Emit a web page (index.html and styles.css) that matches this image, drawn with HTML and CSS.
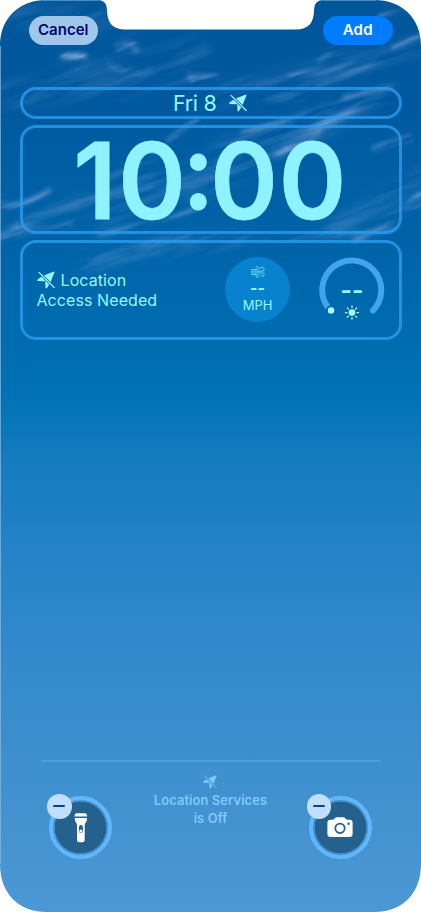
FILE: index.html
```html
<!DOCTYPE html>
<html lang="en">
<head>
<meta charset="utf-8">
<meta name="viewport" content="width=device-width, initial-scale=1">
<title>Lock Screen</title>
<link rel="stylesheet" href="styles.css">
</head>
<body>
<svg class="defs" width="0" height="0" aria-hidden="true">
  <mask id="slash-gap" maskUnits="userSpaceOnUse" x="0" y="0" width="18" height="18">
    <rect width="18" height="18" fill="#fff"/>
    <path d="M-1-1.700 18 17.300" stroke="#000" stroke-width="2.700"/>
  </mask>
  <symbol id="location-slash" viewBox="0 0 18 18">
    <path d="M1 10Q-.7 9.500.6 8.500L5 5.200 16.200.7Q17.800.1 17.300 1.700L13.400 11.600 10.200 16.800Q9 18.300 8.500 16.700L8.200 10.300Z" fill="currentColor" mask="url(#slash-gap)"/>
    <path d="M2 1.300 17.200 16.500" fill="none" stroke="currentColor" stroke-width="1.200" stroke-linecap="round"/>
  </symbol>
</svg>
<main class="screen">
  <svg class="wallpaper" viewBox="0 0 421 912" aria-hidden="true">
    <defs>
      <linearGradient id="sky" x1="0" y1="0" x2="0" y2="1">
        <stop offset="0" stop-color="#00569b"/>
        <stop offset=".11" stop-color="#00599f"/>
        <stop offset=".26" stop-color="#0063a8"/>
        <stop offset=".37" stop-color="#006cb0"/>
        <stop offset=".435" stop-color="#0072b5"/>
        <stop offset=".5" stop-color="#137bbe"/>
        <stop offset=".6" stop-color="#2382c7"/>
        <stop offset=".7" stop-color="#3189cb"/>
        <stop offset=".83" stop-color="#3d8fcd"/>
        <stop offset="1" stop-color="#4b98d4"/>
      </linearGradient>
      <clipPath id="outline">
        <path d="M47 0H97Q107 0 107 9.500V10C107 23 113 29.500 125 29.500H296C308 29.500 314 23 314 10V9.500Q314 0 324 0H374C402 0 421 18 421 46V864C421 894 402 912 374 912H47C19 912 0 894 0 864V46C0 18 19 0 47 0Z"/>
      </clipPath>
      <filter id="streaks" x="0" y="0" width="100%" height="100%" color-interpolation-filters="sRGB">
        <feTurbulence type="fractalNoise" baseFrequency=".014 .1" numOctaves="4" seed="11"/>
        <feColorMatrix values="0 0 0 0 .52  0 0 0 0 .67  0 0 0 0 .87  2.100 0 0 0 -.68"/>
      </filter>
      <filter id="soft" x="-20%" y="-50%" width="140%" height="200%">
        <feGaussianBlur stdDeviation="2.200"/>
      </filter>
      <filter id="haze" x="-20%" y="-50%" width="140%" height="200%">
        <feGaussianBlur stdDeviation="6"/>
      </filter>
      <mask id="clouds" maskUnits="userSpaceOnUse" x="0" y="0" width="421" height="290">
        <g filter="url(#haze)" fill="none" stroke="#fff" stroke-linecap="round">
          <path d="M20 15 130 25M60 80 200 50M225 95 421 45M5 95 180 76M110 220 225 150" stroke-width="24" opacity=".25"/>
          <path d="M190 195 390 93M0 232 150 180M225 150 330 112M330 230 421 175M80 262 240 235" stroke-width="16" opacity=".38"/>
        </g>
        <g filter="url(#soft)" fill="none" stroke="#fff" stroke-linecap="round">
          <path d="M110 64Q125 76 150 69M118 47Q134 40 136 50M63 55 84 57" stroke-width="7" opacity=".95"/>
          <path d="M188 74Q194 86 192 77L217 77M194 86 191 78" stroke-width="5" opacity=".9"/>
          <path d="M290 76 355 65M317 88 380 59M319 61 342 42M379 16 420 8M393 48 420 35" stroke-width="4" opacity=".8"/>
          <path d="M305 117Q335 109 365 93M267 98 302 97M345 98 390 91M285 144 385 92" stroke-width="7" opacity=".6"/>
          <path d="M168 140 197 119M100 180 165 153M217 162 305 121M242 132 300 119" stroke-width="4" opacity=".65"/>
          <path d="M0 204Q24 207 49 191M0 237 58 223M15 228 70 224M98 233Q155 227 199 208" stroke-width="6" opacity=".7"/>
          <path d="M278 155 318 133M374 148 410 138M355 239Q385 227 420 195M380 223 421 203" stroke-width="7" opacity=".7"/>
          <path d="M88 259Q115 260 142 248L188 237M265 242 395 229" stroke-width="5" opacity=".6"/>
        </g>
      </mask>
    </defs>
    <g clip-path="url(#outline)">
      <rect width="421" height="912" fill="url(#sky)"/>
      <g mask="url(#clouds)">
        <rect x="-150" y="-50" width="750" height="550" transform="rotate(-20 210 130)" filter="url(#streaks)"/>
      </g>
      <path d="M.5 46V864" stroke="#8dbbe0" opacity=".7"/>
      <path d="M43 .5H98M323 .5H376" stroke="#8dbbe0" opacity=".55"/>
    </g>
  </svg>

  <header class="toolbar">
    <button class="pill cancel">Cancel</button>
    <button class="pill add">Add</button>
  </header>

  <section class="frames">
    <div class="frame date">
      <span class="date-text">Fri 8</span>
      <svg class="date-icon"><use href="#location-slash"/></svg>
    </div>
    <div class="frame clock">
      <svg class="clock-face" viewBox="0 0 376 103" role="img" aria-label="10:00">
        <text class="clock-text" transform="scale(.965 1)" text-anchor="middle" x="74.500 133.700 181.600 229 300" y="90.500 90.500 81 90.500 90.500">10:00</text>
      </svg>
    </div>
    <div class="frame widgets">
      <div class="location">
        <div class="location-line"><svg class="location-icon"><use href="#location-slash"/></svg><span class="location-a">Location</span></div>
        <div class="location-b">Access Needed</div>
      </div>
      <div class="wind">
        <svg class="wind-icon" viewBox="0 0 14 12" fill="none" stroke="currentColor" stroke-linecap="round">
          <path d="M.5 3.500H6.200A1.400 1.400 0 1 0 4.900 1.700M.5 5.200H11A2 2 0 1 0 9.200 2.600M.5 6.900H11.300A1.700 1.700 0 1 1 9.800 9M.5 8.500H6A1.400 1.400 0 1 1 4.700 10.200" stroke-width=".7"/>
        </svg>
        <span class="wind-value">--</span>
        <span class="wind-unit">MPH</span>
      </div>
      <div class="gauge">
        <svg class="gauge-ring" viewBox="0 0 66 66" aria-hidden="true">
          <path d="M8.300 49.500A29.500 29.500 0 1 1 53.900 53.600" fill="none" stroke="#42a4f1" stroke-width="6" stroke-linecap="round"/>
          <circle cx="12.100" cy="53.500" r="5.200" fill="#006aae"/>
          <circle cx="12.100" cy="53.500" r="3.200" fill="#b0fcff"/>
          <circle cx="33" cy="55.600" r="3.300" fill="#a9faff"/>
          <path d="M33 49V50.600M33 60.600V62.200M26.400 55.600H28M38 55.600H39.600M28.300 50.900 29.500 52.100M36.500 59.100 37.700 60.300M28.300 60.300 29.500 59.100M36.500 52.100 37.700 50.900" stroke="#a9faff" stroke-width="1.300" stroke-linecap="round"/>
        </svg>
        <span class="gauge-value">--</span>
      </div>
    </div>
  </section>

  <footer class="bottom">
    <div class="divider"></div>
    <div class="controls">
      <div class="control">
        <svg class="control-icon" viewBox="0 0 50 50">
          <path d="M18.600 12.600Q18.600 10.300 21 10.300H28.700Q31.100 10.300 31.100 12.600V13.600H18.600ZM18.600 14.900H31.100Q31.100 17.800 29.500 19.800Q28.700 20.900 28.700 22.800V36.900Q28.700 39.200 26.400 39.200H23.300Q21 39.200 21 36.900V22.800Q21 20.900 20.200 19.800Q18.600 17.800 18.600 14.900Z" fill="#fff"/>
          <rect x="22.900" y="21.900" width="4" height="8.200" rx="2" fill="#24618f"/>
          <circle cx="24.900" cy="27.900" r="1.500" fill="#fff"/>
        </svg>
        <span class="remove"></span>
      </div>
      <div class="notice">
        <svg class="notice-icon"><use href="#location-slash"/></svg>
        <span class="notice-a">Location Services</span>
        <span class="notice-b">is Off</span>
      </div>
      <div class="control">
        <svg class="control-icon" viewBox="0 0 50 50">
          <path d="M15.400 16.800H17.600Q18.600 16.800 19.200 16L19.800 15.300Q20.600 14.300 21.800 14.300H28.200Q29.400 14.300 30.200 15.300L30.800 16Q31.400 16.800 32.400 16.800H34.600Q37.600 16.800 37.600 19.800V31Q37.600 34 34.600 34H15.400Q12.400 34 12.400 31V19.800Q12.400 16.800 15.400 16.800Z" fill="#fff"/>
          <circle cx="25" cy="25.300" r="4.700" fill="none" stroke="#24618f" stroke-width="1.800"/>
          <circle cx="33.500" cy="20.700" r="1.200" fill="#24618f"/>
        </svg>
        <span class="remove"></span>
      </div>
    </div>
  </footer>
</main>
</body>
</html>
```
FILE: styles.css
```css
* { box-sizing: border-box; }
body { margin: 0; background: #fff; font-family: Inter, "Liberation Sans", sans-serif; }
.defs { position: absolute; }
.screen { position: relative; width: 421px; height: 912px; overflow: hidden; display: flex; flex-direction: column; }
.wallpaper { position: absolute; inset: 0; width: 421px; height: 912px; z-index: -1; }
svg { display: block; flex: none; }
span, .location-b { white-space: nowrap; }

.toolbar { display: flex; justify-content: space-between; padding: 16px 28.500px 0; height: 87px; }
.pill { width: 69.500px; height: 28.500px; border: 0; border-radius: 15px; padding: 0; font: 600 15px/28px Inter, sans-serif; }
.cancel { background: #a0c7ea; color: #00086c; }
.add { background: #007dff; color: #fff; letter-spacing: .2px; }

.frames { display: flex; flex-direction: column; gap: 6px; padding: 0 19px 0 19.500px; }
.frame { border: 3px solid rgba(44, 158, 242, .78); border-radius: 16px; display: flex; align-items: center; }
.date { height: 32px; justify-content: center; gap: 12px; padding-right: 2px; color: #98f6ff; }
.date-text { font-size: 21.500px; line-height: 25px; letter-spacing: -.3px; }
.date-icon { width: 18px; height: 18px; }
.clock { height: 109px; }
.clock-face { width: 376px; height: 103px; overflow: visible; }
.clock-text { font-family: Inter, sans-serif; font-weight: 600; font-size: 106px; fill: #91f2ff; stroke: #91f2ff; stroke-width: .8px; stroke-linejoin: round; }

.widgets { height: 99.500px; padding: 0 14px; color: #98f6ff; }
.location { width: 189px; font-size: 16px; line-height: 20px; letter-spacing: .08px; }
.location-line { display: flex; align-items: center; gap: 7px; }
.location-icon { width: 18px; height: 18px; margin-right: -1px; }
.wind { width: 65px; height: 65px; border-radius: 50%; background: #0782cf; display: flex; flex-direction: column; align-items: center; padding-top: 9px; }
.wind-icon { width: 14px; height: 12px; }
.wind-value { font-size: 16px; font-weight: 700; line-height: 20px; }
.wind-unit { font-size: 13px; line-height: 15px; }
.gauge { position: relative; width: 66px; height: 66px; margin-left: 29px; display: grid; place-items: center; }
.gauge-ring { grid-area: 1 / 1; width: 66px; height: 66px; }
.gauge-value { grid-area: 1 / 1; font-size: 24.500px; font-weight: 700; line-height: 24px; }

.bottom { margin-top: auto; height: 152px; padding: 0 40.500px; }
.divider { height: 1.500px; background: #57a3df; opacity: .7; }
.controls { display: flex; justify-content: space-between; padding: 0 8.500px; }
.control { position: relative; width: 63px; height: 63px; margin-top: 34.500px; border: 4px solid #60b7fc; border-radius: 50%; background: radial-gradient(circle, #24618f 25.500px, #4590c8 26px); display: grid; place-items: center; }
.control-icon { width: 50px; height: 50px; }
.remove { position: absolute; left: -6px; top: -6px; width: 24.500px; height: 24.500px; border-radius: 50%; background: #bfdffb; display: grid; place-items: center; }
.remove::before { content: ""; width: 12px; height: 1.800px; border-radius: 1px; background: #0b4296; }
.notice { display: flex; flex-direction: column; align-items: center; padding-top: 13px; color: #82c8fa; font-size: 12.900px; font-weight: 600; line-height: 18px; letter-spacing: .1px; }
.notice-icon { width: 14px; height: 14px; margin-bottom: 3px; }
```
